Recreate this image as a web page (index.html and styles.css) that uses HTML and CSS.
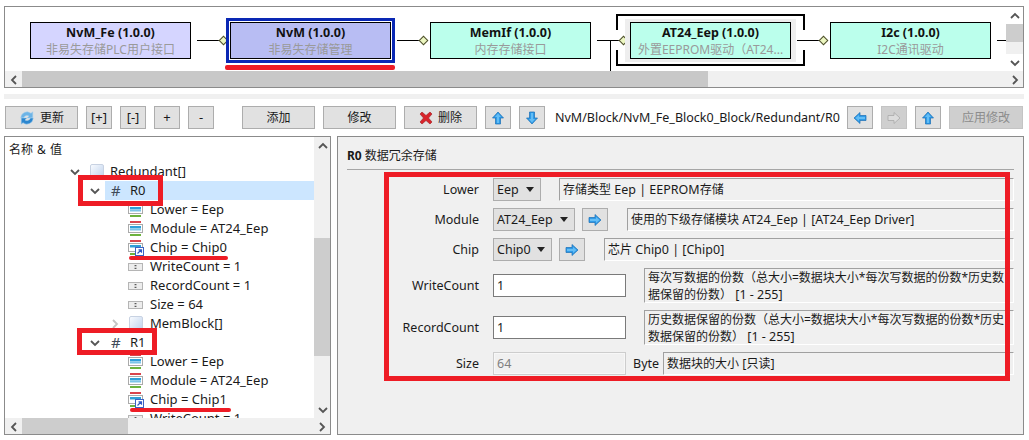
FILE: index.html
```html
<!DOCTYPE html>
<html lang="zh">
<head>
<meta charset="utf-8">
<title>NvM</title>
<link rel="stylesheet" href="styles.css">
</head>
<body>
<svg class="defs" width="0" height="0">
  <symbol id="i-up" viewBox="0 0 14 14"><path d="M7 1 12.500 7H9.500V13H4.500V7H1.500Z" fill="#2f9be8" stroke="#1a6fb5" stroke-width=".7"/><path d="M7 2.500 10 6H8V12H6V6H4Z" fill="#63bdf5"/></symbol>
  <symbol id="i-down" viewBox="0 0 14 14"><path d="M7 13 12.500 7H9.500V1H4.500V7H1.500Z" fill="#2f9be8" stroke="#1a6fb5" stroke-width=".7"/><path d="M6 2H8V8H10L7 11.500 4 8H6Z" fill="#63bdf5"/></symbol>
  <symbol id="i-right" viewBox="0 0 14 14"><path d="M13 7 7 1.500V4.500H1V9.500H7V12.500Z" fill="#2f9be8" stroke="#1a6fb5" stroke-width=".7"/><path d="M2 6H8V4L11.500 7 8 10V8H2Z" fill="#63bdf5"/></symbol>
  <symbol id="i-left" viewBox="0 0 14 14"><path d="M1 7 7 1.500V4.500H13V9.500H7V12.500Z" fill="#2f9be8" stroke="#1a6fb5" stroke-width=".7"/><path d="M12 6H6V4L2.500 7 6 10V8H12Z" fill="#63bdf5"/></symbol>
  <symbol id="i-right-off" viewBox="0 0 14 14"><path d="M13 7 7 1.500V4.500H1V9.500H7V12.500Z" fill="#dcdcdc" stroke="#a8a8a8" stroke-width=".8"/></symbol>
  <symbol id="i-enum" viewBox="0 0 16 16"><rect x="2" y="0" width="11" height="2" fill="#d9444c"/><rect x=".5" y="3.500" width="14" height="8" fill="none" stroke="#555" stroke-dasharray="1 1"/><rect x="2" y="5" width="11" height="2.500" fill="#2f9fd8"/><rect x="2" y="8" width="11" height="1.500" fill="#7cc4e8"/><rect x="2" y="13" width="11" height="2" fill="#6cb33f"/></symbol>
  <symbol id="i-link" viewBox="0 0 16 16"><rect x="2" y="0" width="11" height="2" fill="#d9444c"/><rect x=".5" y="3.500" width="14" height="8" fill="none" stroke="#555" stroke-dasharray="1 1"/><rect x="2" y="5" width="11" height="2.500" fill="#2f9fd8"/><rect x="2" y="13" width="11" height="2" fill="#6cb33f"/><rect x="7.500" y="7.500" width="8" height="8" fill="#fff" stroke="#3b62c4"/><path d="M9.500 13.500 13 10M10.500 9.800H13.500V12.800" fill="none" stroke="#2f57c4" stroke-width="1.200"/></symbol>
  <symbol id="i-num" viewBox="0 0 16 16"><rect x=".5" y="4.500" width="14" height="7" fill="#ededed" stroke="#b5b5b5"/><path d="M6.500 7 7.500 6 8.500 7ZM6.500 9 7.500 10 8.500 9Z" fill="#444" stroke="#444" stroke-width=".4"/></symbol>
  <symbol id="i-box" viewBox="0 0 14 16"><defs><linearGradient id="g-box" x1="0" y1="0" x2="1" y2="1"><stop offset="0" stop-color="#fafcff"/><stop offset="1" stop-color="#bcd0ec"/></linearGradient></defs><rect x=".5" y=".5" width="13" height="15" rx="1.500" fill="url(#g-box)" stroke="#c8d2e2"/></symbol>
  <symbol id="c-down" viewBox="0 0 10 10"><path d="M1 3 5 7 9 3" fill="none" stroke="#555" stroke-width="1.800"/></symbol>
  <symbol id="c-up" viewBox="0 0 10 10"><path d="M1 7 5 3 9 7" fill="none" stroke="#555" stroke-width="1.800"/></symbol>
  <symbol id="c-left" viewBox="0 0 10 10"><path d="M7 1 3 5 7 9" fill="none" stroke="#555" stroke-width="1.800"/></symbol>
  <symbol id="c-right" viewBox="0 0 10 10"><path d="M3 1 7 5 3 9" fill="none" stroke="#555" stroke-width="1.800"/></symbol>
  <symbol id="c-right-pale" viewBox="0 0 10 10"><path d="M3 1 7 5 3 9" fill="none" stroke="#c4c4c4" stroke-width="1.800"/></symbol>
</svg>

<section class="diagram">
  <div class="canvas">
    <div class="node violet n1"><b>NvM_Fe (1.0.0)</b><span>非易失存储PLC用户接口</span></div>
    <i class="wire w1"></i><i class="pin p1"></i>
    <div class="selected"></div>
    <div class="node indigo n2"><b>NvM (1.0.0)</b><span>非易失存储管理</span></div>
    <div class="red-bar"></div>
    <i class="wire w2"></i><i class="pin p2"></i>
    <div class="node mint n3"><b>MemIf (1.0.0)</b><span>内存存储接口</span></div>
    <i class="wire w3"></i><i class="wire-v"></i><i class="pin p3"></i>
    <div class="halo"></div>
    <div class="bracket"></div>
    <div class="node mint n4"><b>AT24_Eep (1.0.0)</b><span>外置EEPROM驱动（AT24...</span></div>
    <i class="wire w4"></i><i class="pin p4"></i>
    <div class="node mint n5"><b>I2c (1.0.0)</b><span>I2C通讯驱动</span></div>
    <i class="wire w5"></i>
  </div>
  <div class="vbar vbar-top">
    <span class="arrow"><svg width="10" height="10"><use href="#c-up"/></svg></span>
    <span class="vthumb-top"></span>
    <span class="vspace"></span>
    <span class="arrow"><svg width="10" height="10"><use href="#c-down"/></svg></span>
  </div>
  <div class="hbar hbar-top">
    <span class="arrow"><svg width="10" height="10"><use href="#c-left"/></svg></span>
    <span class="hthumb-top"></span>
    <span class="hspace"></span>
    <span class="arrow"><svg width="10" height="10"><use href="#c-right"/></svg></span>
  </div>
</section>

<div class="band"></div>

<nav class="toolbar">
  <button class="btn wide"><svg width="16" height="16" viewBox="0 0 18 18"><path d="M2 9a7 7 0 0 1 11.500-5.300L15.500 2v7H9l2.200-2.200a4 4 0 0 0-6 2.200Z" fill="#6db4e6" stroke="#a9cfee" stroke-width=".6"/><path d="M16 9a7 7 0 0 1-11.500 5.300L2.500 16V9H9l-2.200 2.200a4 4 0 0 0 6-2.200Z" fill="#2b86cf" stroke="#a9cfee" stroke-width=".6"/></svg><span class="cn">更新</span></button>
  <button class="btn small">[+]</button>
  <button class="btn small">[-]</button>
  <button class="btn small">+</button>
  <button class="btn small">-</button>
  <button class="btn wide gap-l"><span class="cn">添加</span></button>
  <button class="btn wide"><span class="cn">修改</span></button>
  <button class="btn wide"><svg width="14" height="14" viewBox="0 0 14 14"><path d="M1 3 3 1 7 4.500 11 1 13 3 9.500 7 13 11 11 13 7 9.500 3 13 1 11 4.500 7Z" fill="#d8232a" stroke="#9c1c20" stroke-width=".6"/></svg><span class="cn">删除</span></button>
  <button class="btn small"><svg width="14" height="14"><use href="#i-up"/></svg></button>
  <button class="btn small"><svg width="14" height="14"><use href="#i-down"/></svg></button>
  <span class="path">NvM/Block/NvM_Fe_Block0_Block/Redundant/R0</span>
  <button class="btn small"><svg width="14" height="14"><use href="#i-left"/></svg></button>
  <button class="btn small off"><svg width="14" height="14"><use href="#i-right-off"/></svg></button>
  <button class="btn small"><svg width="14" height="14"><use href="#i-up"/></svg></button>
  <button class="btn wide off apply"><span class="cn">应用修改</span></button>
</nav>

<main class="panes">
  <section class="tree">
    <div class="tree-view">
      <div class="tree-head">名称 &amp; 值</div>
      <div class="row lv1"><svg class="chev" width="10" height="10"><use href="#c-down"/></svg><svg class="ico" width="14" height="16"><use href="#i-box"/></svg><span>Redundant[]</span></div>
      <div class="row lv2 current"><svg class="chev" width="10" height="10"><use href="#c-down"/></svg><span class="hash">#</span><span>R0</span></div>
      <div class="row lv3"><svg class="ico" width="16" height="16"><use href="#i-enum"/></svg><span>Lower = Eep</span></div>
      <div class="row lv3"><svg class="ico" width="16" height="16"><use href="#i-enum"/></svg><span>Module = AT24_Eep</span></div>
      <div class="row lv3"><svg class="ico" width="16" height="16"><use href="#i-link"/></svg><span>Chip = Chip0</span></div>
      <div class="row lv3"><svg class="ico" width="16" height="16"><use href="#i-num"/></svg><span>WriteCount = 1</span></div>
      <div class="row lv3"><svg class="ico" width="16" height="16"><use href="#i-num"/></svg><span>RecordCount = 1</span></div>
      <div class="row lv3"><svg class="ico" width="16" height="16"><use href="#i-num"/></svg><span>Size = 64</span></div>
      <div class="row lv2b"><svg class="chev" width="10" height="10"><use href="#c-right-pale"/></svg><svg class="ico" width="14" height="16"><use href="#i-box"/></svg><span>MemBlock[]</span></div>
      <div class="row lv2"><svg class="chev" width="10" height="10"><use href="#c-down"/></svg><span class="hash">#</span><span>R1</span></div>
      <div class="row lv3"><svg class="ico" width="16" height="16"><use href="#i-enum"/></svg><span>Lower = Eep</span></div>
      <div class="row lv3"><svg class="ico" width="16" height="16"><use href="#i-enum"/></svg><span>Module = AT24_Eep</span></div>
      <div class="row lv3"><svg class="ico" width="16" height="16"><use href="#i-link"/></svg><span>Chip = Chip1</span></div>
      <div class="row lv3"><svg class="ico" width="16" height="16"><use href="#i-num"/></svg><span>WriteCount = 1</span></div>
      <div class="mark box-r0"></div>
      <div class="mark box-r1"></div>
      <div class="mark line-c0"></div>
      <div class="mark line-c1"></div>
    </div>
    <div class="vbar vbar-tree">
      <span class="arrow"><svg width="10" height="10"><use href="#c-up"/></svg></span>
      <span class="vspace-a"></span>
      <span class="vthumb-tree"></span>
      <span class="vspace"></span>
      <span class="arrow"><svg width="10" height="10"><use href="#c-down"/></svg></span>
    </div>
    <div class="hbar hbar-tree">
      <span class="arrow"><svg width="10" height="10"><use href="#c-left"/></svg></span>
      <span class="hthumb-tree"></span>
      <span class="hspace"></span>
      <span class="arrow"><svg width="10" height="10"><use href="#c-right"/></svg></span>
    </div>
  </section>

  <section class="detail">
    <h1 class="title"><b>R0</b> 数据冗余存储</h1>
    <div class="form">
      <div class="mark box-form"></div>
      <div class="f-row">
        <label>Lower</label>
        <span class="combo c-lower">Eep</span>
        <p class="desc d-lower"><span><span class="cn">存储类型</span> Eep | EEPROM<span class="cn">存储</span></span></p>
      </div>
      <div class="f-row">
        <label>Module</label>
        <span class="combo c-module">AT24_Eep</span>
        <button class="btn small go"><svg width="14" height="14"><use href="#i-right"/></svg></button>
        <p class="desc d-module"><span><span class="cn">使用的下级存储模块</span> AT24_Eep | [AT24_Eep Driver]</span></p>
      </div>
      <div class="f-row">
        <label>Chip</label>
        <span class="combo c-chip">Chip0</span>
        <button class="btn small go"><svg width="14" height="14"><use href="#i-right"/></svg></button>
        <p class="desc d-chip"><span><span class="cn">芯片</span> Chip0 | [Chip0]</span></p>
      </div>
      <div class="f-row tall">
        <label>WriteCount</label>
        <span class="field">1</span>
        <p class="desc d-count"><span class="cn">每次写数据的份数（总大小=数据块大小*每次写数据的份数*历史数<br>据保留的份数）</span> [1 - 255]</p>
      </div>
      <div class="f-row tall">
        <label>RecordCount</label>
        <span class="field">1</span>
        <p class="desc d-count"><span class="cn">历史数据保留的份数（总大小=数据块大小*每次写数据的份数*历史<br>数据保留的份数）</span> [1 - 255]</p>
      </div>
      <div class="f-row">
        <label>Size</label>
        <span class="field readonly">64</span>
        <span class="unit">Byte</span>
        <p class="desc d-size"><span><span class="cn">数据块的大小</span> [<span class="cn">只读</span>]</span></p>
      </div>
    </div>
  </section>
</main>
</body>
</html>
```
FILE: styles.css
```css
* { box-sizing: border-box; }
html, body { margin: 0; padding: 0; }
body {
  width: 1029px;
  height: 440px;
  overflow: hidden;
  background: #fff;
  color: #1a1a1a;
  font: 13px/19px "Noto Sans", "Noto Sans CJK SC", sans-serif;
}
.defs { position: absolute; }
svg { display: block; flex: none; }
.cn { font-size: 12px; }

/* Dependency diagram */
.diagram {
  position: relative;
  width: 1020px;
  height: 82px;
  margin: 6px 0 0 4px;
  border: 1px solid #8b8b8b;
  display: grid;
  grid-template-columns: 1fr 17px;
  grid-template-rows: 64px 16px;
}
.canvas { position: relative; overflow: hidden; }
.node {
  position: absolute;
  top: 15px;
  width: 161px;
  height: 37px;
  border: 1px solid #000;
  text-align: center;
  line-height: 17px;
  padding-top: 1px;
}
.node b, .node span { display: block; white-space: nowrap; }
.node b { color: #111; font-size: 12.500px; }
.node span { color: #9a9a9a; font-size: 12px; }
.violet { background: #d5d5ff; }
.indigo { background: #b8bdf3; }
.mint { background: #bbffec; }
.n1 { left: 25px; }
.n2 { left: 225px; }
.n3 { left: 425px; }
.n4 { left: 625px; }
.n5 { left: 825px; }
.selected {
  position: absolute; left: 221px; top: 11px; width: 169px; height: 45px;
  border: 3px solid #0a28b4;
}
.red-bar {
  position: absolute; left: 220px; top: 58px; width: 170px; height: 5px;
  background: #ee1c25; border-radius: 2px;
}
.halo { position: absolute; left: 620px; top: 12px; width: 171px; height: 43px; background: #eee; }
.bracket {
  position: absolute; left: 611px; top: 7px; width: 189px; height: 52px;
  border: 2px solid #000;
  clip-path: polygon(0 0, 100% 0, 100% 16px, calc(100% - 3px) 16px, calc(100% - 3px) 36px, 100% 36px, 100% 100%, 0 100%, 0 36px, 3px 36px, 3px 16px, 0 16px);
}
.wire { position: absolute; top: 33px; height: 1px; background: #000; }
.w1 { left: 192px; width: 25px; }
.w2 { left: 392px; width: 25px; }
.w3 { left: 592px; width: 25px; }
.w4 { left: 792px; width: 25px; }
.w5 { left: 992px; width: 9px; }
.wire-v { position: absolute; left: 605px; top: 33px; width: 1px; height: 31px; background: #000; }
.pin {
  position: absolute; top: 30px; width: 7px; height: 7px;
  background: #ecf7c0; border: 1px solid #4d4d30; transform: rotate(45deg);
}
.p1 { left: 215px; }
.p2 { left: 415px; }
.p3 { left: 615px; }
.p4 { left: 815px; }

/* Scrollbars */
.vbar { display: flex; flex-direction: column; background: #f0f0f0; }
.hbar { display: flex; background: #f0f0f0; }
.arrow { flex: none; width: 17px; height: 17px; display: flex; align-items: center; justify-content: center; }
.vbar-top { grid-column: 2; grid-row: 1; background: #fff; }
.vthumb-top { height: 18px; background: #cdcdcd; flex: none; }
.vspace, .hspace { flex: 1; background: #f0f0f0; }
.vspace-a { height: 84px; flex: none; }
.hbar-top { grid-column: 1 / 3; grid-row: 2; }
.hthumb-top { width: 686px; background: #c8c8c8; flex: none; }

.band { height: 5px; margin: 6px 5px 0 4px; background: #f0f0f0; }

/* Toolbar */
.toolbar {
  display: flex;
  align-items: center;
  height: 23px;
  margin: 7px 0 0 5px;
  gap: 8px;
}
.btn {
  display: flex;
  align-items: center;
  justify-content: center;
  gap: 5px;
  height: 23px;
  padding: 0;
  border: 1px solid #adadad;
  background: #e1e1e1;
  color: #1a1a1a;
  font: inherit;
}
.small { width: 26px; flex: none; }
.wide { width: 73px; flex: none; }
.gap-l { margin-left: 20px; }
.off { background: #cfcfcf; border-color: #c4c4c4; color: #8c8c8c; }
.apply { width: 74px; }
.path { width: 284px; margin-left: 2px; font-size: 12.500px; white-space: nowrap; flex: none; }

/* Panes */
.panes { display: flex; gap: 6px; height: 299px; margin: 7px 0 0 4px; }
.tree {
  position: relative;
  width: 327px;
  border: 1px solid #8b8b8b;
  display: grid;
  grid-template-columns: 1fr 16px;
  grid-template-rows: 1fr 16px;
  overflow: hidden;
}
.tree-view { position: relative; overflow: hidden; padding-top: 3px; }
.tree-head { height: 22px; padding-left: 4px; font-size: 12px; word-spacing: 1px; line-height: 19px; }
.row {
  display: flex;
  align-items: center;
  height: 19px;
  white-space: nowrap;
}
.lv1 { padding-left: 65px; }
.lv2 { padding-left: 85px; }
.lv2b { padding-left: 105px; }
.lv3 { padding-left: 123px; }
.chev { margin-right: 10px; }
.lv2 .chev { margin-right: 11px; }
.lv2b .chev { margin-right: 9px; }
.ico { margin-right: 6px; }
.lv2b .ico { margin-right: 7px; }
.hash { width: 19px; font-size: 15px; color: #3f4a58; }
.current { background: linear-gradient(90deg, #fff 100px, #cce6ff 100px); }
.mark { position: absolute; }
.box-r0 { left: 73px; top: 38px; width: 85px; height: 31px; border: 5px solid #ee1c25; }
.box-r1 { left: 72px; top: 191px; width: 80px; height: 27px; border: 5px solid #ee1c25; }
.line-c0 { left: 124px; top: 119px; width: 99px; height: 4px; background: #ee1c25; border-radius: 2px; }
.line-c1 { left: 125px; top: 271px; width: 101px; height: 4px; background: #ee1c25; border-radius: 2px; }
.vbar-tree { grid-column: 2; grid-row: 1; background: #f0f0f0; }
.vthumb-tree { height: 118px; background: #cdcdcd; flex: none; }
.hbar-tree { grid-column: 1 / 3; grid-row: 2; }
.hthumb-tree { width: 106px; background: #cdcdcd; flex: none; }

/* Detail */
.detail {
  width: 687px;
  background: #f0f0f0;
  border: 1px solid #8b8b8b;
  padding: 0 9px;
}
.title {
  margin: 0;
  height: 33px;
  padding-top: 9px;
  border-bottom: 1px solid #a6a6a6;
  font-size: 12px;
  font-weight: 400;
  line-height: 19px;
}
.form { position: relative; padding-top: 8px; font-size: 12.500px; }
.box-form { left: 37px; top: 2px; width: 626px; height: 209px; border: 5px solid #ee1c25; pointer-events: none; }
.f-row { display: flex; align-items: center; height: 23px; margin-bottom: 7px; }
.f-row.tall { height: 35px; }
.f-row label { width: 132px; text-align: right; margin-right: 14px; flex: none; }
.combo {
  position: relative;
  display: flex;
  align-items: center;
  height: 23px;
  padding-left: 3px;
  border: 1px solid #adadad;
  background: #e1e1e1;
  flex: none;
}
.combo::after {
  content: "";
  position: absolute;
  right: 6px;
  top: 8px;
  border: 4px solid transparent;
  border-top: 5px solid #222;
  border-bottom: 0;
}
.c-lower { width: 48px; }
.c-module { width: 82px; }
.c-chip { width: 59px; }
.go { margin-left: 7px; }
.desc {
  margin: 0;
  align-self: stretch;
  flex: 1;
  padding: 0 0 0 3px;
  border: 1px solid #f0f0f0;
  border-top-color: #a0a0a0;
  border-left-color: #a0a0a0;
  border-bottom-color: #fff;
  border-right-color: #fff;
  line-height: 17px;
  white-space: nowrap;
  overflow: hidden;
  display: flex;
  align-items: center;
}
.d-count { display: block; }
.d-lower { margin-left: 18px; }
.d-module { margin-left: 19px; }
.d-chip { margin-left: 19px; }
.d-count { margin-left: 18px; }
.field {
  width: 133px;
  height: 23px;
  flex: none;
  padding-left: 3px;
  border: 1px solid #7a7a7a;
  background: #fff;
  line-height: 21px;
}
.readonly { background: #f0f0f0; border-color: #cdcdcd; color: #7f7f7f; box-shadow: inset 0 0 0 1px #f7f7f7; }
.unit { margin: 0 4px 0 7px; width: 26px; flex: none; }
```
